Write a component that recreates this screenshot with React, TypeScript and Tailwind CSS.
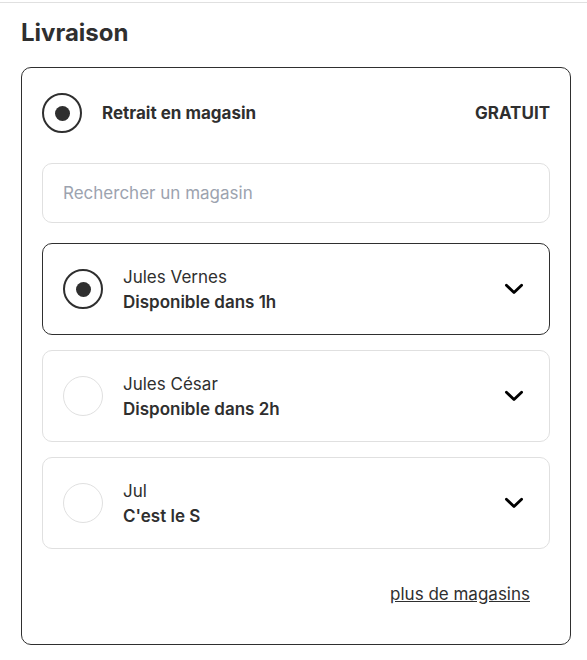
import { useState } from "react";

const stores = [
  { id: "vernes", name: "Jules Vernes", note: "Disponible dans 1h" },
  { id: "cesar", name: "Jules César", note: "Disponible dans 2h" },
  { id: "jul", name: "Jul", note: "C'est le S" },
];

const radioClass =
  "grid size-10 shrink-0 cursor-pointer appearance-none place-content-center rounded-full border border-[#e0e0e0] bg-white before:size-[15px] before:rounded-full before:content-[''] checked:border-2 checked:border-[#2f2f2f] checked:before:bg-[#2f2f2f]";

function Chevron() {
  return (
    <svg width="20" height="12" viewBox="0 0 20 12" fill="none" aria-hidden="true">
      <path
        d="M2.4 2.2 10 9.6 17.6 2.2"
        stroke="#000"
        strokeWidth="2.8"
        strokeLinecap="round"
        strokeLinejoin="round"
      />
    </svg>
  );
}

export default function App() {
  const [selected, setSelected] = useState("vernes");

  return (
    <main className="bg-white pt-0.5 font-['Inter','Liberation_Sans',sans-serif] text-[17px] leading-[25px] text-[#2f2f2f]">
      <section className="border-t border-[#e0e0e0] pt-3 pr-4 pb-4 pl-[21px]">
        <h2 className="text-2xl leading-9 font-bold">Livraison</h2>

        <div className="mt-4 rounded-[10px] border border-[#2f2f2f] px-5 pt-[25px] pb-[37px]">
          <div className="flex items-center gap-5">
            <input id="pickup" type="radio" name="delivery" defaultChecked className={radioClass} />
            <label htmlFor="pickup" className="grow font-bold">
              Retrait en magasin
            </label>
            <span className="font-bold">GRATUIT</span>
          </div>

          <input
            type="search"
            aria-label="Rechercher un magasin"
            placeholder="Rechercher un magasin"
            className="mt-[30px] block h-[60px] w-full rounded-[10px] border border-[#e0e0e0] px-5 placeholder:text-[#9ca3af] focus:outline-none"
          />

          <ul className="mt-5 flex flex-col gap-[15px]">
            {stores.map((store) => (
              <li
                key={store.id}
                className={`flex items-center gap-5 rounded-[10px] border py-[19px] pr-[25px] pl-5 ${
                  selected === store.id ? "border-[#2f2f2f]" : "border-[#e0e0e0]"
                }`}
              >
                <input
                  id={store.id}
                  type="radio"
                  name="store"
                  checked={selected === store.id}
                  onChange={() => setSelected(store.id)}
                  className={radioClass}
                />
                <label htmlFor={store.id} className="grow pt-0.5">
                  <span className="block">{store.name}</span>
                  <span className="block font-semibold">{store.note}</span>
                </label>
                <button type="button" aria-label={`Détails de ${store.name}`} className="cursor-pointer">
                  <Chevron />
                </button>
              </li>
            ))}
          </ul>

          <div className="mt-[33px] flex justify-end pr-5">
            <a href="#magasins" className="underline">
              plus de magasins
            </a>
          </div>
        </div>
      </section>
    </main>
  );
}
